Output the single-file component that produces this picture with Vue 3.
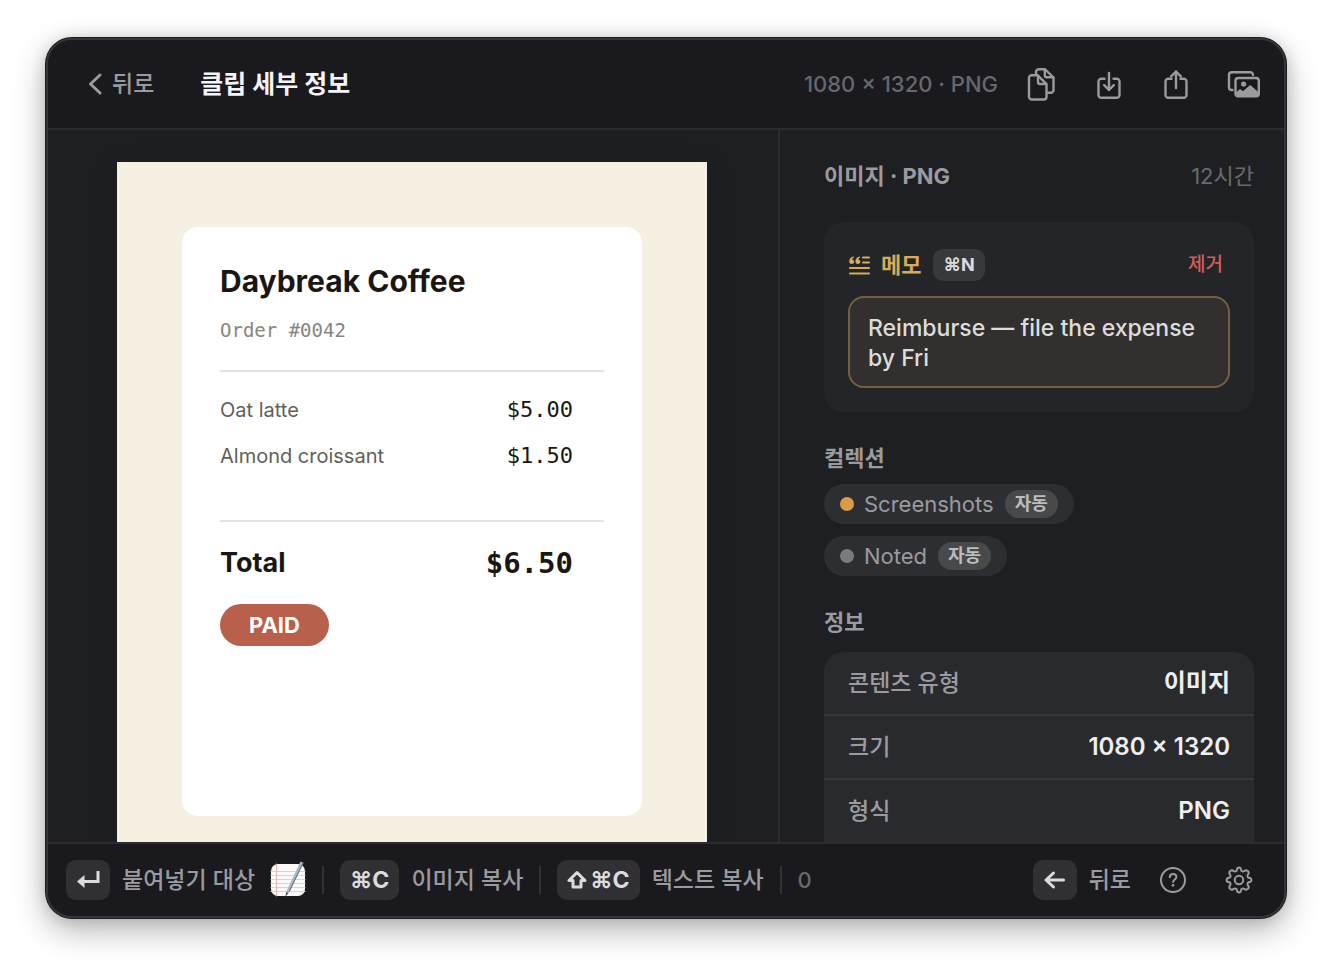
<script setup>
import { ref } from 'vue'

const note = ref('Reimburse — file the expense by Fri')

const items = [
  { name: 'Oat latte', price: '$5.00' },
  { name: 'Almond croissant', price: '$1.50' }
]

const collections = [
  { name: 'Screenshots', tone: 'amber' },
  { name: 'Noted', tone: 'gray' }
]

const info = [
  { label: '콘텐츠 유형', value: '이미지' },
  { label: '크기', value: '1080 × 1320' },
  { label: '형식', value: 'PNG' }
]
</script>

<template>
  <div class="desktop">
    <main class="window">
      <header class="topbar">
        <button class="back" type="button">
          <svg width="14" height="22" viewBox="0 0 14 22"><path d="M12 2 2.500 11 12 20" /></svg>
          뒤로
        </button>
        <h1>클립 세부 정보</h1>
        <span class="meta">1080 × 1320 · PNG</span>
        <div class="actions">
          <button type="button" aria-label="복사">
            <svg width="32" height="36" viewBox="0 0 32 36">
              <path d="M10 8.500V6a2.800 2.800 0 0 1 2.800-2.800h6L27.500 11.500V24a2.800 2.800 0 0 1-2.800 2.800H21.500" />
              <path d="M18.800 3.500v5.800a2 2 0 0 0 2 2h6.400" />
              <path d="M5.800 9.200h5.700l9 9v12.500a2.800 2.800 0 0 1-2.800 2.800H5.800A2.800 2.800 0 0 1 3 30.700V12a2.800 2.800 0 0 1 2.800-2.800z" />
              <path d="M12 9.800v6.200a2 2 0 0 0 2 2h6.200" />
            </svg>
          </button>
          <button type="button" aria-label="저장">
            <svg width="32" height="36" viewBox="0 0 32 36">
              <path d="M11.500 12.700H8.300a2.800 2.800 0 0 0-2.800 2.800V29a2.800 2.800 0 0 0 2.800 2.800h15.400a2.800 2.800 0 0 0 2.800-2.800V15.500a2.800 2.800 0 0 0-2.800-2.800H20.500" />
              <path d="M16 7v17M11.200 19.200l4.800 4.800 4.800-4.800" />
            </svg>
          </button>
          <button type="button" aria-label="공유">
            <svg width="32" height="36" viewBox="0 0 32 36">
              <path d="M11.500 12.700H8.300a2.800 2.800 0 0 0-2.800 2.800V29a2.800 2.800 0 0 0 2.800 2.800h15.400a2.800 2.800 0 0 0 2.800-2.800V15.500a2.800 2.800 0 0 0-2.800-2.800H20.500" />
              <path d="M16 22V5.500M11.200 10.300L16 5.500l4.800 4.800" />
            </svg>
          </button>
          <button type="button" aria-label="이미지 열기">
            <svg width="34" height="36" viewBox="0 0 34 36">
              <path d="M5.500 24H4.800A2.800 2.800 0 0 1 2 21.200V9a2.800 2.800 0 0 1 2.800-2.800h18.400A2.800 2.800 0 0 1 26 9" />
              <rect x="8.500" y="12" width="23.300" height="18.400" rx="2.800" />
              <circle class="solid" cx="16.600" cy="18" r="2.600" />
              <path class="solid" d="M8.500 27l4.500-4 3 2.200 6.200-5.400a1.500 1.500 0 0 1 2 0L31.800 26.500v3l-2 1.500H10.500l-2-1.500z" />
            </svg>
          </button>
        </div>
      </header>

      <section class="body">
        <div class="preview">
          <article class="sheet">
            <div class="receipt">
              <h2>Daybreak Coffee</h2>
              <p class="order">Order #0042</p>
              <hr />
              <ul class="items">
                <li v-for="item in items" :key="item.name">
                  <span>{{ item.name }}</span>
                  <span class="price">{{ item.price }}</span>
                </li>
              </ul>
              <hr />
              <p class="total">
                <span>Total</span>
                <span class="price">$6.50</span>
              </p>
              <span class="paid">PAID</span>
            </div>
          </article>
        </div>

        <aside class="sidebar">
          <div class="kind">
            <strong>이미지 · PNG</strong>
            <span>12시간</span>
          </div>

          <section class="memo">
            <div class="memo-head">
              <svg width="22" height="20" viewBox="0 0 22 20">
                <path d="M15 2.500h6M15 7.500h6M2 13h19M2 18.500h19" />
                <path class="quote" d="M5.800 1.400C3 1.800 1.200 3.700 1.200 6.200c0 1.700 1 2.800 2.500 2.800 1.400 0 2.400-1 2.400-2.300 0-1.200-.8-2.100-2-2.200.2-.9 1-1.600 1.900-1.900z" />
                <path class="quote" d="M12 1.400C9.200 1.800 7.400 3.700 7.400 6.200c0 1.700 1 2.800 2.500 2.800 1.400 0 2.400-1 2.400-2.300 0-1.200-.8-2.100-2-2.200.2-.9 1-1.600 1.900-1.900z" />
              </svg>
              <label for="note">메모</label>
              <kbd>⌘N</kbd>
              <button type="button">제거</button>
            </div>
            <textarea id="note" v-model="note" rows="2"></textarea>
          </section>

          <h3>컬렉션</h3>
          <ul class="chips">
            <li v-for="c in collections" :key="c.name">
              <i :class="c.tone"></i>
              <span>{{ c.name }}</span>
              <b>자동</b>
            </li>
          </ul>

          <h3>정보</h3>
          <table class="info">
            <tbody>
              <tr v-for="row in info" :key="row.label">
                <th scope="row">{{ row.label }}</th>
                <td>{{ row.value }}</td>
              </tr>
            </tbody>
          </table>
        </aside>
      </section>

      <footer class="bottombar">
        <button class="command" type="button">
          <kbd>
            <svg width="24" height="20" viewBox="0 0 24 20">
              <path class="square" d="M22 1v10.500H7" />
              <path class="tip" d="M8.500 5v13L1 11.500z" />
            </svg>
          </kbd>
          붙여넣기 대상
          <svg class="notepad" width="36" height="40" viewBox="0 0 36 40">
            <rect class="paper" x="1" y="4" width="34" height="32" rx="7" />
            <path class="rules" d="M1 11.500h34M1 15.500h34M1 19.500h34M1 23.500h34M1 27.500h34M1 31.500h34" />
            <path class="margin" d="M6.500 4v32" />
            <path class="pen" d="M30.500 1.500l3 1.200L20 31l-4 5.500-.5-.5 1.500-6z" />
            <path class="pen-edge" d="M33 3L19.500 31" />
            <path class="nib" d="M16.500 32l1.500 1-2.500 3.500z" />
          </svg>
        </button>
        <span class="divider"></span>
        <button class="command" type="button"><kbd>⌘C</kbd>이미지 복사</button>
        <span class="divider"></span>
        <button class="command" type="button">
          <kbd>
            <svg width="20" height="20" viewBox="0 0 20 20">
              <path d="M10 2.500L2 10.500h4V17h8v-6.500h4z" />
            </svg>⌘C
          </kbd>텍스트 복사
        </button>
        <span class="divider"></span>
        <span class="count">0</span>

        <button class="command end" type="button">
          <kbd>
            <svg width="24" height="20" viewBox="0 0 24 20"><path d="M20.500 10H3.500M10.500 3l-7.500 7 7.500 7" /></svg>
          </kbd>
          뒤로
        </button>
        <button class="tool" type="button" aria-label="도움말">
          <svg width="28" height="28" viewBox="0 0 28 28">
            <circle cx="14" cy="14" r="12" />
            <path d="M10.800 11.200c0-2 1.400-3.200 3.300-3.200s3.300 1.200 3.300 3c0 2.400-3.300 2.500-3.300 5" />
            <circle class="solid" cx="14" cy="19.300" r="1.400" />
          </svg>
        </button>
        <button class="tool" type="button" aria-label="설정">
          <svg width="28" height="28" viewBox="0 0 28 28">
            <circle cx="14" cy="14" r="4.200" />
            <path d="M12.300 2.300Q14 .9 15.700 2.300L16.500 5Q18 6 19.500 5L21 4.200Q23.500 4.500 23.800 7L23 8.500Q22 10 23 11.500L25.700 12.300Q27.100 14 25.700 15.700L23 16.500Q22 18 23 19.500L23.800 21Q23.500 23.500 21 23.800L19.500 23Q18 22 16.500 23L15.700 25.700Q14 27.100 12.300 25.700L11.500 23Q10 22 8.500 23L7 23.800Q4.500 23.500 4.200 21L5 19.500Q6 18 5 16.500L2.300 15.700Q.9 14 2.300 12.300L5 11.500Q6 10 5 8.500L4.200 7Q4.500 4.500 7 4.200L8.500 5Q10 6 11.500 5z" />
          </svg>
        </button>
      </footer>
    </main>
  </div>
</template>

<style>
body {
  background: #fff;
}
</style>

<style scoped>
* {
  box-sizing: border-box;
}
.desktop {
  height: 100vh;
  padding: 38px 46px 54px;
  font-family: Inter, 'Noto Sans CJK KR', sans-serif;
  font-size: 22px;
  line-height: 24px;
  color: #9b9b9f;
}
.window {
  display: flex;
  flex-direction: column;
  height: 100%;
  overflow: hidden;
  background: #1e1f23;
  border: 2px solid #36363a;
  border-radius: 26px;
  box-shadow: 0 0 0 1px #1c1c1f, 0 12px 32px rgba(0, 0, 0, 0.3), 0 0 16px rgba(0, 0, 0, 0.14);
}
h1,
h2,
h3,
p,
ul {
  margin: 0;
  padding: 0;
}
ul {
  list-style: none;
}
button {
  padding: 0;
  border: 0;
  background: none;
  font: inherit;
  color: inherit;
}
svg {
  display: block;
  fill: none;
  stroke: currentColor;
  stroke-width: 2;
  stroke-linecap: round;
  stroke-linejoin: round;
}
.solid {
  fill: currentColor;
  stroke: none;
}

.topbar {
  display: flex;
  align-items: center;
  flex: none;
  height: 90px;
  padding: 0 23px 0 40px;
  background: #1a191e;
  border-bottom: 2px solid #2c2b30;
}
.back {
  display: flex;
  align-items: center;
  gap: 10px;
  font-size: 23px;
  font-weight: 500;
}
.back svg {
  stroke-width: 3;
}
h1 {
  margin-left: 46px;
  font-size: 25px;
  font-weight: 700;
  color: #f4f3f8;
}
.meta {
  margin-left: auto;
  font-weight: 500;
  color: #68676c;
}
.actions {
  display: flex;
  gap: 35px;
  margin-left: 28px;
}
.actions svg {
  stroke-width: 2.4;
}

.body {
  display: flex;
  flex: 1;
  min-height: 0;
}
.preview {
  flex: 1;
  min-width: 0;
  overflow: hidden;
  padding: 32px 71px 0 69px;
}
.sheet {
  aspect-ratio: 1080 / 1320;
  padding: 65px 65px 67px;
  background: #f6f0e2;
  box-shadow: 0 4px 24px rgba(0, 0, 0, 0.12);
}
.receipt {
  height: 100%;
  padding: 34px 38px;
  background: #fff;
  border-radius: 16px;
  color: #1a1712;
}
.receipt hr {
  height: 2px;
  margin: 0;
  border: 0;
  background: #e4e4e4;
}
h2 {
  font-size: 30px;
  line-height: 40px;
  font-weight: 700;
}
.order {
  margin: 17px 0 28px;
  font-family: 'DejaVu Sans Mono', monospace;
  font-size: 19px;
  line-height: 24px;
  color: #87857f;
}
.items {
  margin: 15px 0 41px;
  font-size: 20px;
  line-height: 46px;
  color: #625f58;
}
.items li,
.total {
  display: flex;
  justify-content: space-between;
  padding-right: 31px;
}
.price {
  font-family: 'DejaVu Sans Mono', monospace;
  font-size: 22px;
  color: #1a1712;
}
.total {
  margin: 21px 0;
  font-size: 27px;
  line-height: 40px;
  font-weight: 700;
}
.total .price {
  font-size: 29px;
}
.paid {
  display: inline-block;
  padding: 0 29px;
  border-radius: 21px;
  background: #b8604c;
  font-weight: 700;
  line-height: 42px;
  color: #fff;
}

.sidebar {
  flex: none;
  width: 506px;
  overflow: hidden;
  padding: 30px 30px 0 44px;
  border-left: 2px solid #2c2c30;
}
.kind {
  display: flex;
  justify-content: space-between;
  line-height: 32px;
}
.kind span {
  color: #6a6a6e;
}
.memo {
  margin: 30px 0;
  padding: 27px 24px 24px;
  border-radius: 20px;
  background: #242528;
}
.memo-head {
  display: flex;
  align-items: center;
  height: 32px;
  margin-bottom: 15px;
  color: #d9ab59;
}
.memo-head label {
  margin: 0 12px 0 11px;
  font-weight: 700;
}
.memo-head button {
  margin: 0 7px 0 auto;
  font-size: 19px;
  font-weight: 500;
  color: #d45d5b;
}
.quote {
  fill: currentColor;
  stroke: none;
}
kbd {
  display: flex;
  align-items: center;
  justify-content: center;
  gap: 3px;
  border-radius: 10px;
  background: #38393c;
  font-family: inherit;
  font-weight: 700;
  color: #dcdcde;
}
.memo-head kbd {
  height: 32px;
  padding: 0 10px;
  font-size: 18px;
}
textarea {
  display: block;
  width: 100%;
  height: 92px;
  padding: 15px 18px 0;
  border: 2px solid #756040;
  border-radius: 16px;
  outline: none;
  resize: none;
  overflow: hidden;
  background: #31302e;
  font: inherit;
  font-size: 23px;
  font-weight: 500;
  line-height: 30px;
  color: #dedddc;
}
h3 {
  font-size: 22px;
  line-height: 32px;
  font-weight: 700;
}
.chips {
  display: flex;
  flex-direction: column;
  align-items: flex-start;
  gap: 12px;
  margin: 10px 0 30px;
}
.chips li {
  display: flex;
  align-items: center;
  height: 40px;
  padding: 0 16px;
  border-radius: 20px;
  background: #2d2e31;
}
.chips i {
  width: 14px;
  height: 14px;
  margin-right: 10px;
  border-radius: 50%;
}
.amber {
  background: #d99d45;
}
.gray {
  background: #7b7b7f;
}
.chips b {
  margin-left: 11px;
  padding: 0 10px;
  border-radius: 14px;
  background: #48494b;
  font-size: 18px;
  line-height: 28px;
  color: #bdbdbf;
}
.info {
  width: 100%;
  margin-top: 14px;
  border-spacing: 0;
  border-radius: 20px 20px 0 0;
  background: #292a2d;
}
.info th,
.info td {
  height: 64px;
  padding: 0 24px;
  border-bottom: 2px solid #37383b;
  font-size: 23px;
  font-weight: 500;
  text-align: left;
}
.info td {
  font-size: 24px;
  font-weight: 600;
  text-align: right;
  color: #eeeef0;
}

.bottombar {
  display: flex;
  align-items: center;
  flex: none;
  height: 74px;
  padding: 0 31px 0 18px;
  border-top: 2px solid #2c2b30;
  background: #1a191e;
}
.command {
  display: flex;
  align-items: center;
  gap: 12px;
  font-size: 23px;
  font-weight: 500;
}
.command kbd {
  height: 40px;
  padding: 0 10px;
  background: #302f34;
}
.command kbd svg {
  stroke-width: 3;
}
.command .tip {
  fill: currentColor;
  stroke: none;
}
.command .square {
  stroke-linecap: butt;
  stroke-linejoin: miter;
}
.divider {
  width: 2px;
  height: 28px;
  margin: 0 16px;
  background: #323136;
}
.count {
  font-weight: 500;
  color: #6a6a6e;
}
.end {
  margin-left: auto;
}
.tool {
  margin-left: 28px;
}
.tool + .tool {
  margin-left: 38px;
}
.notepad {
  margin-left: 3px;
}
.notepad * {
  stroke: none;
}
.notepad .paper {
  fill: #fafafa;
}
.notepad .rules {
  stroke: #d4d4d6;
  stroke-width: 1;
}
.notepad .margin {
  stroke: #efb5b5;
  stroke-width: 1;
}
.notepad .pen {
  fill: #a9b8c4;
}
.notepad .pen-edge {
  stroke: #5d6a75;
  stroke-width: 1;
}
.notepad .nib {
  fill: #333;
}
</style>
